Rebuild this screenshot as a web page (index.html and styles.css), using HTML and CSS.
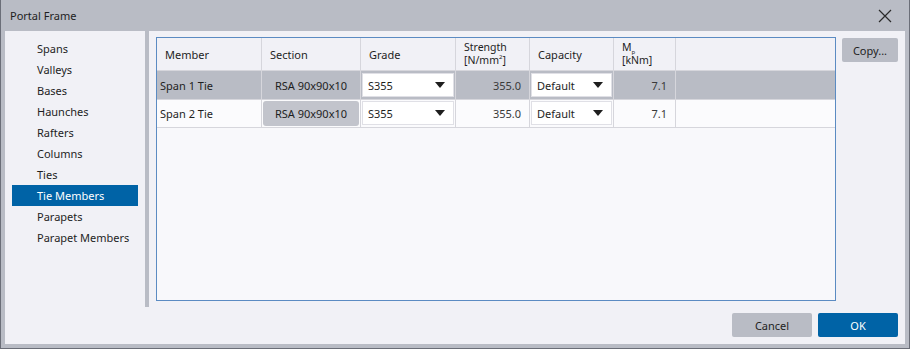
FILE: index.html
```html
<!DOCTYPE html>
<html>
<head>
<meta charset="utf-8">
<link rel="stylesheet" href="styles.css">
</head>
<body>
<div class="window">
  <div class="titlebar">
    <span class="title">Portal Frame</span>
    <svg class="close" width="14" height="14" viewBox="0 0 14 14"><path d="M1 1 L13 13 M13 1 L1 13" stroke="#2a2a2a" stroke-width="1.2" fill="none"/></svg>
  </div>
  <div class="body">
    <ul class="nav">
      <li>Spans</li>
      <li>Valleys</li>
      <li>Bases</li>
      <li>Haunches</li>
      <li>Rafters</li>
      <li>Columns</li>
      <li>Ties</li>
      <li class="active">Tie Members</li>
      <li>Parapets</li>
      <li>Parapet Members</li>
    </ul>
    <div class="sep"></div>
    <div class="main">
      <div class="grid">
        <div class="row head">
          <div class="cell">Member</div>
          <div class="cell">Section</div>
          <div class="cell">Grade</div>
          <div class="cell two"><span class="l1">Strength</span><span class="l2">[N/mm<sup>2</sup>]</span></div>
          <div class="cell">Capacity</div>
          <div class="cell two"><span class="l1">M<sub>p</sub></span><span class="l2">[kNm]</span></div>
          <div class="cell last"></div>
        </div>
        <div class="row sel">
          <div class="cell">Span 1 Tie</div>
          <div class="cell center">RSA 90x90x10</div>
          <div class="cell drop"><div class="combo"><span>S355</span><i class="arrow"></i></div></div>
          <div class="cell num">355.0</div>
          <div class="cell drop"><div class="combo"><span>Default</span><i class="arrow"></i></div></div>
          <div class="cell num">7.1</div>
          <div class="cell last"></div>
        </div>
        <div class="row">
          <div class="cell">Span 2 Tie</div>
          <div class="cell boxed"><div class="ro">RSA 90x90x10</div></div>
          <div class="cell drop"><div class="combo"><span>S355</span><i class="arrow"></i></div></div>
          <div class="cell num">355.0</div>
          <div class="cell drop"><div class="combo"><span>Default</span><i class="arrow"></i></div></div>
          <div class="cell num">7.1</div>
          <div class="cell last"></div>
        </div>
      </div>
      <div class="side">
        <button class="btn">Copy...</button>
      </div>
    </div>
  </div>
  <div class="footer">
    <button class="btn wide">Cancel</button>
    <button class="btn wide primary">OK</button>
  </div>
</div>
</body>
</html>
```
FILE: styles.css
```css
* { box-sizing: border-box; }
html, body { margin: 0; padding: 0; }
body {
  width: 910px;
  height: 349px;
  font-family: "Noto Sans", "Open Sans", sans-serif;
  font-size: 11px;
  color: #1e1e1e;
  background: #6b6e78;
}
.window {
  width: 910px;
  height: 349px;
  border: 1px solid #6b6e78;
  border-top: none;
  background: #b9bcc5;
  display: flex;
  flex-direction: column;
  padding: 0 4px 4px 4px;
}
.titlebar {
  height: 31px;
  display: flex;
  align-items: center;
  justify-content: space-between;
  padding: 0 13px 0 5px;
  flex: none;
}
.title { font-size: 11px; color: #1e1e1e; }
.close { display: block; }
.body {
  display: flex;
  height: 276px;
  background: #f1f1f6;
  flex: none;
}
.nav {
  list-style: none;
  margin: 0;
  padding: 7px 7px 0 7px;
  width: 140px;
}
.nav li {
  height: 21px;
  line-height: 21px;
  padding-left: 25px;
  white-space: nowrap;
}
.nav li.active {
  background: #0063a6;
  color: #fff;
}
.sep {
  width: 4px;
  background: #b9bcc5;
}
.main {
  flex: 1;
  display: flex;
  padding: 6px 0 0 7px;
  gap: 6px;
}
.grid {
  width: 680px;
  height: 264px;
  border: 1px solid #5b8bc2;
  background: #f8f8fb;
}
.row {
  display: grid;
  grid-template-columns: 105px 99px 95px 74px 84px 62px 1fr;
  height: 28px;
}
.row.head {
  height: 33px;
  background: #f1f1f6;
}
.cell {
  border-right: 1px solid #d6d6dc;
  border-bottom: 1px solid #d6d6dc;
  display: flex;
  align-items: center;
  padding-left: 3px;
  white-space: nowrap;
}
.head .cell { padding-left: 8px; }
.head .cell.two {
  flex-direction: column;
  align-items: flex-start;
  justify-content: flex-start;
  padding-top: 3px;
  font-size: 10.5px;
}
.two .l1, .two .l2 { display: block; height: 13px; line-height: 13px; }
.cell sup { font-size: 6px; vertical-align: 5px; line-height: 0; }
.cell sub { font-size: 6px; vertical-align: -3px; line-height: 0; }
.cell.last { border-right: none; }
.row.sel { background: #b9bcc5; }
.row:not(.head):not(.sel) { background: #fbfbfd; }
.cell.center { justify-content: center; padding-left: 0; }
.cell.num { justify-content: flex-end; padding: 0 8px 0 0; color: #3a3a3a; }
.cell.drop { padding: 2px 1px 2px 1px; }
.combo {
  flex: 1;
  height: 24px;
  background: #fff;
  border: 1px solid #e0e0e6;
  display: flex;
  align-items: center;
  justify-content: space-between;
  padding: 0 8px 0 5px;
}
.arrow {
  width: 0;
  height: 0;
  border-left: 5px solid transparent;
  border-right: 5px solid transparent;
  border-top: 6px solid #1e1e1e;
}
.cell.boxed { padding: 1px 1px 1px 1px; }
.ro {
  flex: 1;
  height: 25px;
  background: #c2c4cc;
  border-radius: 3px;
  display: flex;
  align-items: center;
  justify-content: center;
}
.side { padding-top: 1px; }
.btn {
  font-family: "Noto Sans", "Open Sans", sans-serif;
  font-size: 11px;
  color: #1e1e1e;
  background: #b9bcc5;
  border: none;
  border-radius: 2px;
  height: 24px;
  width: 56px;
  padding: 0;
}
.footer {
  height: 37px;
  background: #f1f1f6;
  display: flex;
  justify-content: flex-end;
  align-items: flex-start;
  padding: 6px 7px 0 0;
  gap: 6px;
  flex: none;
}
.btn.wide { width: 80px; }
.btn.primary { background: #0063a6; color: #fff; }
```
